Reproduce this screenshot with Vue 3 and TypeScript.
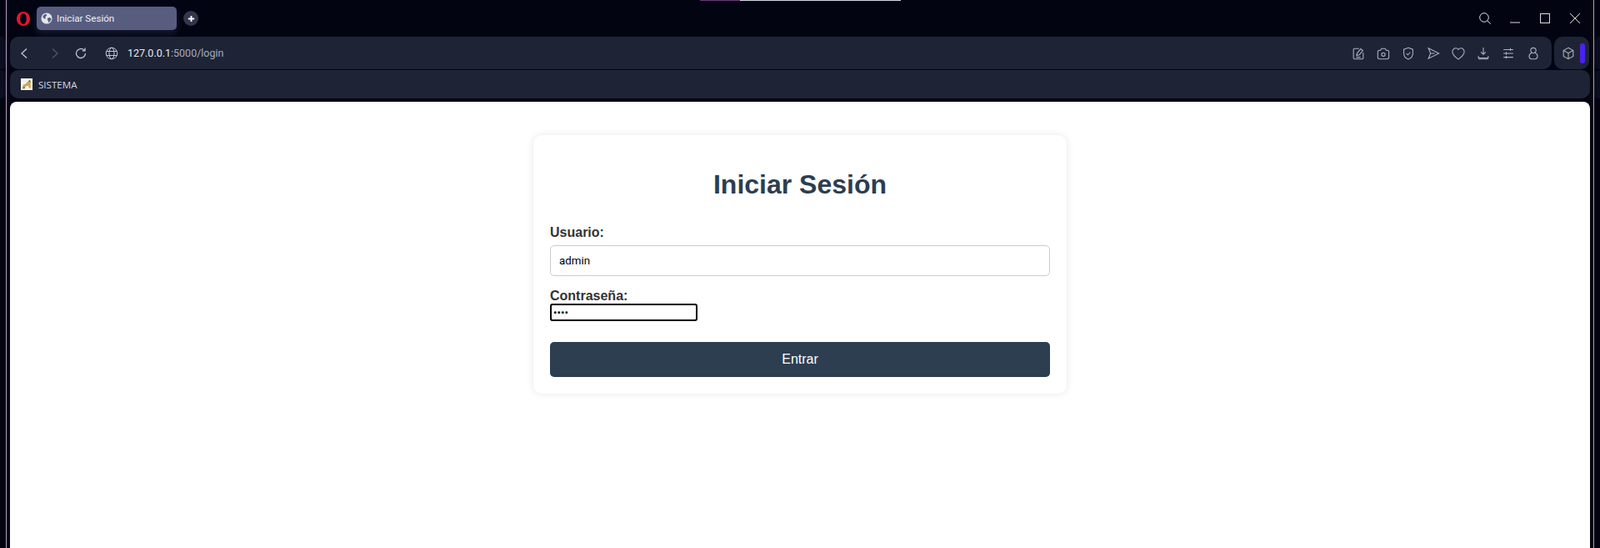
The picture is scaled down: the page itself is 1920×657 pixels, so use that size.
<script setup lang="ts">
const toolbarIcons = [
  "M13 5H6.5A1.5 1.5 0 0 0 5 6.500v12A1.5 1.5 0 0 0 6.500 20h11a1.500 1.500 0 0 0 1.500-1.500V11M9.500 15l1-3.500 5-6 3 2.500-5 6zM9 17.500h6",
  "M4 10a2.500 2.500 0 0 1 2.500-2.500H8L9.500 5h5L16 7.500h1.500A2.500 2.500 0 0 1 20 10v7.500a2.500 2.500 0 0 1-2.500 2.500h-11A2.500 2.500 0 0 1 4 17.500zM12 11a2.500 2.500 0 1 0 0 5 2.500 2.500 0 0 0 0-5z",
  "M12 4l6.500 2.300V12c0 4-2.700 7-6.500 8.500C8.200 19 5.500 16 5.500 12V6.300zM9.300 12.200l2 2 3.500-3.700",
  "M5 4.500L20 12 5 19.500 8 12zM8 12h6",
  "M12 20.500C6 16.500 3.500 13 3.500 9.700A4.900 4.900 0 0 1 8.400 4.500c1.500 0 2.700.7 3.600 2 .9-1.300 2.100-2 3.600-2a4.900 4.900 0 0 1 4.900 5.200c0 3.300-2.500 6.800-8.500 10.800z",
  "M12 3.500v10M8.500 10L12 13.500 15.500 10M5 15.500v3h14v-3M5 20h14",
  "M5 6.500h14M5 12h14M5 17.500h14M15 4.500v4M9 10v4M9 15.500v4",
  "M12 4a3.800 3.800 0 1 0 0 7.600A3.800 3.800 0 0 0 12 4zM9.500 11.500C7.200 12.300 6 14 6 16.300 6 18.500 7.500 20 9.500 20h5c2 0 3.500-1.500 3.500-3.700 0-2.300-1.200-4-3.500-4.800"
];
</script>

<template>
  <div class="window">
    <span class="ghost ghost-left ghost-a"></span>
    <span class="ghost ghost-left ghost-b"></span>
    <span class="ghost ghost-right ghost-a"></span>
    <span class="ghost ghost-right ghost-b"></span>
    <div class="top-strip"><span class="strip-pink"></span><span class="strip-white"></span></div>

    <div class="tab-row">
      <svg class="opera" viewBox="0 0 16 17" aria-hidden="true">
        <path fill="#e8152b" fill-rule="evenodd" d="M8 0C3.300 0 0 3.700 0 8.500S3.300 17 8 17s8-3.700 8-8.500S12.700 0 8 0zm0 2c2.300 0 3.800 2.900 3.800 6.500S10.300 15 8 15 4.200 12.100 4.200 8.500 5.700 2 8 2z" />
      </svg>
      <div class="tab">
        <svg class="tab-globe" viewBox="0 0 16 16" aria-hidden="true">
          <circle cx="8" cy="8" r="7.500" fill="#e4e6ee" />
          <path fill="#585d80" d="M2.500 5l3-2.600 3 .4-.8 2-1.700.8.800 1.600-1 1.600-2.200-1.200zM9.500 7.500l3.200-.6L14.500 9l-2 3.600-2 1.200-.5-2.600-1.200-1.600z" />
        </svg>
        <span>Iniciar Sesión</span>
      </div>
      <div class="new-tab">
        <svg viewBox="0 0 10 10" aria-hidden="true"><path d="M5 1v8M1 5h8" stroke="#fff" stroke-width="2" /></svg>
      </div>
      <div class="window-controls">
        <svg class="win-icon win-search" viewBox="0 0 14 14" aria-hidden="true"><circle cx="6" cy="6" r="5.300" /><path d="M9.800 9.800L13.800 13.800" /></svg>
        <svg class="win-icon" viewBox="0 0 12 12" aria-hidden="true"><path d="M0 11h12" /></svg>
        <svg class="win-icon" viewBox="0 0 12 12" aria-hidden="true"><rect x="0.500" y="0.500" width="11" height="11" /></svg>
        <svg class="win-icon" viewBox="0 0 12 12" aria-hidden="true"><path d="M0 0l12 12M12 0L0 12" /></svg>
      </div>
    </div>

    <div class="address-row">
      <div class="address-bar">
        <svg class="nav nav-back" viewBox="0 0 16 16" aria-hidden="true"><path d="M11 2.500L5 8l6 5.500" /></svg>
        <svg class="nav nav-forward" viewBox="0 0 16 16" aria-hidden="true"><path d="M5 2.500L11 8l-6 5.500" /></svg>
        <svg class="nav nav-reload" viewBox="0 0 16 16" aria-hidden="true"><path d="M13.500 8a5.500 5.500 0 1 1-1.600-3.900M13 1.500v3.300H9.700" /></svg>
        <svg class="nav nav-globe" viewBox="0 0 16 16" aria-hidden="true"><circle cx="8" cy="8" r="6.800" /><ellipse cx="8" cy="8" rx="3" ry="6.800" /><path d="M1.800 5.500h12.400M1.800 10.500h12.400" /></svg>
        <div class="url"><b>127.0.0.1</b>:5000/login</div>
        <div class="tools">
          <svg v-for="d in toolbarIcons" :key="d" class="tool" viewBox="0 0 24 24" aria-hidden="true"><path :d="d" /></svg>
        </div>
      </div>
      <div class="ext-box">
        <svg class="tool" viewBox="0 0 24 24" aria-hidden="true"><path d="M12 4l7 3.800v8.400L12 20l-7-3.800V7.800zM5 7.800l7 3.800 7-3.800M12 11.600V20" /></svg>
        <span class="ext-pill"></span>
      </div>
    </div>

    <div class="bookmarks">
      <svg class="bm-icon" viewBox="0 0 14 14" aria-hidden="true">
        <rect width="14" height="14" fill="#f6f3e8" />
        <path fill="#c9a45f" d="M1.500 11.500l1.500-4L6 6.500 8.500 3.500 11 2l1.500 2-1 2.500.5 5h-2.200L9 8.500l-3 1-1.500 2z" />
        <path fill="#5c4a2a" d="M1.500 12l3.500-1.800-.5 2zM9 3.500L11 2v2z" />
      </svg>
      <span>SISTEMA</span>
    </div>

    <div class="page">
      <div class="card">
        <h1>Iniciar Sesión</h1>
        <label for="user">Usuario:</label>
        <input id="user" class="text-input" type="text" value="admin" />
        <label for="pass" class="pass-label">Contraseña:</label>
        <input id="pass" class="pass-input" type="password" value="1234" />
        <button type="button">Entrar</button>
      </div>
    </div>
  </div>
</template>

<style scoped>
.window {
  height: 657px;
  background: #020412;
  position: relative;
  overflow: hidden;
  font-family: Roboto, "Open Sans", sans-serif;
  display: flex;
  flex-direction: column;
}

.window::before,
.window::after {
  content: "";
  position: absolute;
  top: 0;
  bottom: 0;
  width: 1px;
  background: #b79cc0;
}

.window::before { left: 7px; }
.window::after { right: 7px; }

/* neighbouring window edges peeking out at the sides */
.ghost {
  position: absolute;
  width: 7px;
  background: #0a0e1e;
}

.ghost-left { left: 0; border-radius: 0 6px 6px 0; }
.ghost-right { right: 0; border-radius: 6px 0 0 6px; }
.ghost-a { top: 44px; height: 39px; }
.ghost-b { top: 84px; height: 34px; }

.top-strip {
  position: absolute;
  top: 0;
  left: 840px;
  display: flex;
  height: 1px;
}

.strip-pink { width: 48px; background: #6b3a78; }
.strip-white { width: 193px; background: #d8d8e4; }

.tab-row {
  height: 44px;
  display: flex;
  align-items: center;
  padding: 0 24px 0 20px;
  flex: none;
}

.opera { width: 16px; height: 17px; margin-right: 8px; }

.tab {
  width: 168px;
  height: 28px;
  background: #585d80;
  border-radius: 5px;
  display: flex;
  align-items: center;
  padding-left: 5px;
  box-sizing: border-box;
  color: #eef0f6;
  font-size: 11.600px;
  box-shadow: 0 4px 8px rgba(80, 86, 125, 0.3);
}

.tab-globe { width: 14px; height: 14px; margin-right: 5px; }

.new-tab {
  width: 18px;
  height: 18px;
  margin-left: 8px;
  border-radius: 50%;
  background: #33364a;
  display: flex;
  align-items: center;
  justify-content: center;
}

.new-tab svg { width: 9px; height: 9px; }

.window-controls {
  margin-left: auto;
  display: flex;
  gap: 24px;
  align-items: center;
}

.win-icon {
  width: 12px;
  height: 12px;
  fill: none;
  stroke: #d8dae2;
  stroke-width: 1;
}

.win-search { width: 14px; height: 14px; margin-right: -1px; }

.address-row {
  display: flex;
  gap: 3px;
  padding: 0 13px 0 12px;
  flex: none;
}

.address-bar,
.ext-box {
  height: 39px;
  background: #1e2436;
  border-radius: 10px;
  display: flex;
  align-items: center;
  box-sizing: border-box;
}

.address-bar {
  flex: 1;
  padding: 0 12px 0 9px;
}

.ext-box {
  width: 42px;
  padding-left: 7px;
  gap: 4px;
}

.nav {
  width: 16px;
  height: 16px;
  fill: none;
  stroke: #c4c7d2;
  stroke-width: 1.300;
  flex: none;
}

.nav-forward { margin-left: 21px; stroke: #50556a; }
.nav-reload { margin-left: 15px; }
.nav-globe { margin-left: 21px; margin-right: 11px; stroke-width: 1; }

.url {
  font-size: 12.500px;
  color: #a6aaba;
}

.url b {
  font-weight: 400;
  color: #e6e8ef;
}

.tools {
  margin-left: auto;
  display: flex;
  gap: 10px;
}

.tool {
  width: 20px;
  height: 20px;
  fill: none;
  stroke: #adb0be;
  stroke-width: 1.300;
  flex: none;
}

.ext-pill {
  width: 6px;
  height: 24px;
  border-radius: 3px;
  background: #4a22f0;
}

.bookmarks {
  height: 34px;
  margin: 1px 12px 0;
  background: #1e2436;
  border-radius: 10px;
  display: flex;
  align-items: center;
  padding-left: 13px;
  color: #d4d7e0;
  font-family: "Open Sans", sans-serif;
  font-size: 11.600px;
  flex: none;
}

.bm-icon { width: 14px; height: 14px; margin-right: 7px; }

.page {
  flex: 1;
  margin: 4px 12px 0;
  background: #fff;
  border-radius: 8px 8px 0 0;
  display: flex;
  justify-content: center;
  padding-top: 40px;
  min-height: 0;
}

.card {
  width: 640px;
  height: 310px;
  box-sizing: border-box;
  padding: 20px;
  border-radius: 10px;
  background: #fff;
  box-shadow: 0 0 10px rgba(0, 0, 0, 0.1);
  font-family: "Liberation Sans", Arial, sans-serif;
}

h1 {
  margin: 21px 0 30px;
  text-align: center;
  font-size: 32px;
  line-height: 37px;
  font-weight: 700;
  color: #2c3e50;
}

label {
  display: block;
  font-size: 16px;
  line-height: 18px;
  font-weight: 700;
  color: #333;
  margin-bottom: 6px;
}

.pass-label { margin-bottom: 0; margin-top: 15px; }

.text-input {
  display: block;
  width: 100%;
  height: 37px;
  box-sizing: border-box;
  border: 1px solid #ccc;
  border-radius: 5px;
  padding: 0 10px;
  font-family: Roboto, sans-serif;
  font-size: 13.333px;
  color: #000;
  background: #fff;
  outline: none;
}

.pass-input {
  display: block;
  width: 177px;
  height: 21px;
  box-sizing: border-box;
  border: 2px solid #000;
  border-radius: 3px;
  padding: 0 2px;
  font-size: 13.333px;
  font-family: Roboto, sans-serif;
  background: #fff;
  outline: none;
}

button {
  display: block;
  width: 100%;
  height: 42px;
  margin-top: 25px;
  border: 0;
  border-radius: 5px;
  background: #2c3e50;
  color: #fff;
  font-family: "Liberation Sans", Arial, sans-serif;
  font-size: 16px;
}
</style>

<style>
body { margin: 0; overflow: hidden; }
</style>
